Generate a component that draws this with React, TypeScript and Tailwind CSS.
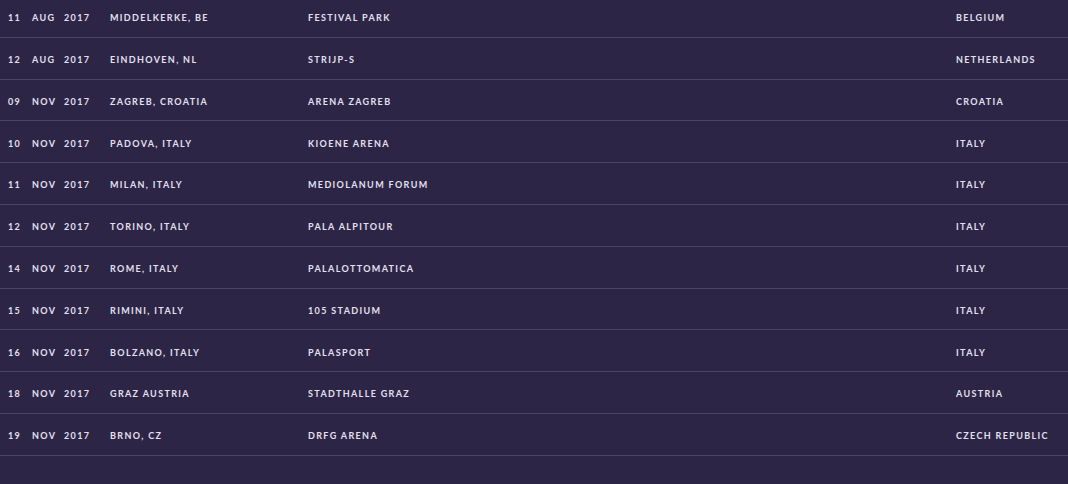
import * as React from 'react'

interface Show {
  day: string
  month: string
  year: string
  city: string
  venue: string
  country: string
}

const shows: Show[] = [
  { day: '11', month: 'AUG', year: '2017', city: 'MIDDELKERKE, BE', venue: 'FESTIVAL PARK', country: 'BELGIUM' },
  { day: '12', month: 'AUG', year: '2017', city: 'EINDHOVEN, NL', venue: 'STRIJP-S', country: 'NETHERLANDS' },
  { day: '09', month: 'NOV', year: '2017', city: 'ZAGREB, CROATIA', venue: 'ARENA ZAGREB', country: 'CROATIA' },
  { day: '10', month: 'NOV', year: '2017', city: 'PADOVA, ITALY', venue: 'KIOENE ARENA', country: 'ITALY' },
  { day: '11', month: 'NOV', year: '2017', city: 'MILAN, ITALY', venue: 'MEDIOLANUM FORUM', country: 'ITALY' },
  { day: '12', month: 'NOV', year: '2017', city: 'TORINO, ITALY', venue: 'PALA ALPITOUR', country: 'ITALY' },
  { day: '14', month: 'NOV', year: '2017', city: 'ROME, ITALY', venue: 'PALALOTTOMATICA', country: 'ITALY' },
  { day: '15', month: 'NOV', year: '2017', city: 'RIMINI, ITALY', venue: '105 STADIUM', country: 'ITALY' },
  { day: '16', month: 'NOV', year: '2017', city: 'BOLZANO, ITALY', venue: 'PALASPORT', country: 'ITALY' },
  { day: '18', month: 'NOV', year: '2017', city: 'GRAZ AUSTRIA', venue: 'STADTHALLE GRAZ', country: 'AUSTRIA' },
  { day: '19', month: 'NOV', year: '2017', city: 'BRNO, CZ', venue: 'DRFG ARENA', country: 'CZECH REPUBLIC' },
]

export default function App() {
  return (
    <div className="h-[484px] w-[1068px] overflow-hidden bg-[#2c2546] font-['Lato','Liberation_Sans',sans-serif] text-[9px] font-bold tracking-[0.15em] text-[#e4e0f0]">
      <div className="-mt-[4px] flex flex-col">
        {shows.map((show, index) => (
          <div
            key={index}
            className="flex h-[41.8px] items-center border-b border-[#4a4466] pt-[3px]"
          >
            <span className="w-[32px] shrink-0 pl-[8px]">{show.day}</span>
            <span className="w-[32px] shrink-0">{show.month}</span>
            <span className="w-[46px] shrink-0">{show.year}</span>
            <span className="w-[198px] shrink-0">{show.city}</span>
            <span className="flex-1">{show.venue}</span>
            <span className="w-[112px] shrink-0">{show.country}</span>
          </div>
        ))}
      </div>
    </div>
  )
}
